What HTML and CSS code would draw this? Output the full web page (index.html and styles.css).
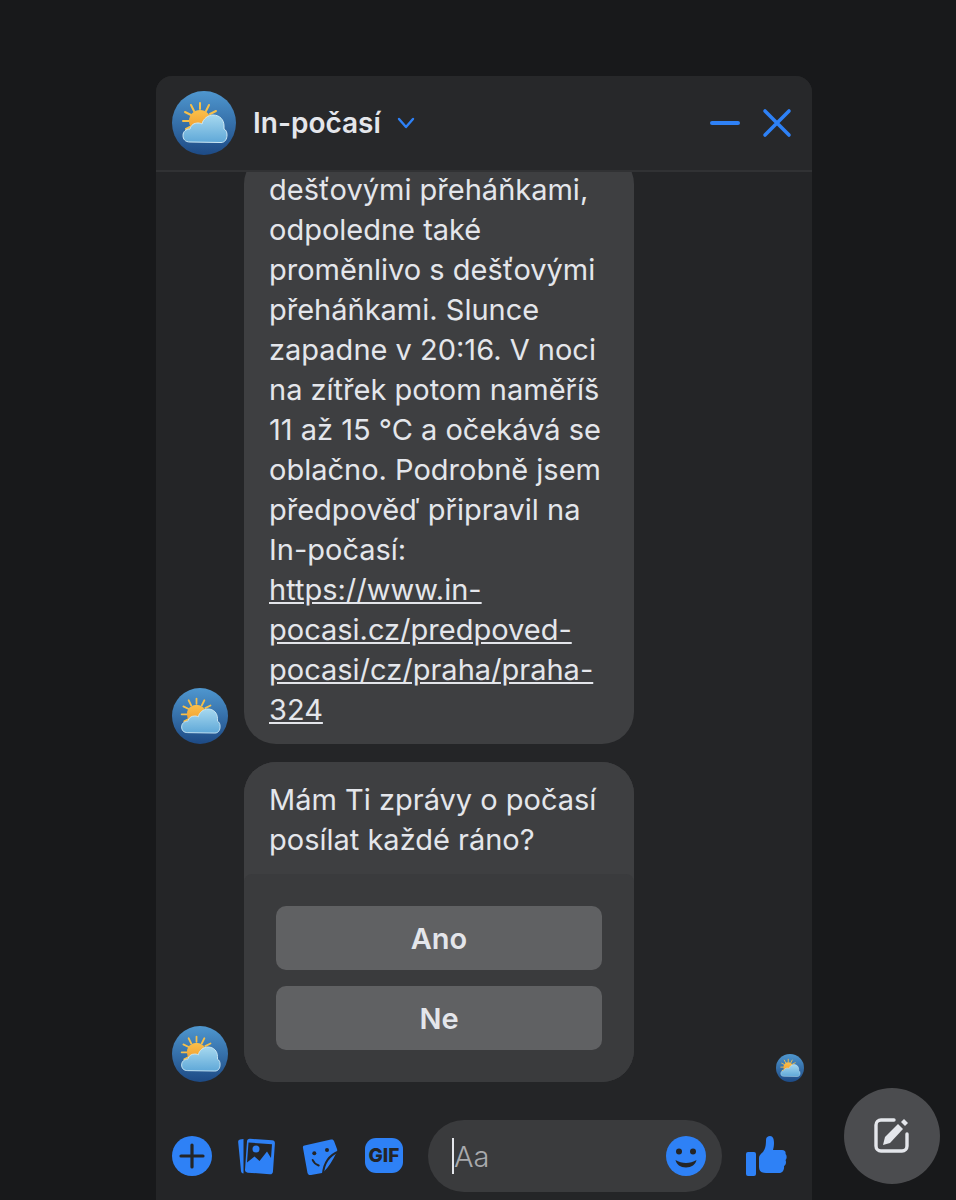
FILE: index.html
```html
<!DOCTYPE html>
<html>
<head>
  <meta charset="utf-8">
  <title>In-počasí</title>
  <link rel="stylesheet" href="styles.css">
</head>
<body>
  <svg class="sprites" width="0" height="0">
    <defs>
      <linearGradient id="skyFill" x1="0" y1="0" x2="0" y2="1">
        <stop offset="0" stop-color="#4f97cf"/>
        <stop offset="1" stop-color="#1d4a85"/>
      </linearGradient>
      <linearGradient id="sunFill" x1="0" y1="0" x2="0" y2="1">
        <stop offset="0" stop-color="#fbc04a"/>
        <stop offset="1" stop-color="#ef9a2d"/>
      </linearGradient>
      <linearGradient id="cloudFill" x1="0" y1="0" x2="0" y2="1">
        <stop offset="0" stop-color="#a6d8ef"/>
        <stop offset="1" stop-color="#5fa8d8"/>
      </linearGradient>
    </defs>
    <symbol id="weather" viewBox="0 0 64 64">
      <circle cx="32" cy="32" r="32" fill="url(#skyFill)"/>
      <g stroke="#f7c04a" stroke-width="2" stroke-linecap="round">
        <path d="M28 12v6M19 14l3 6M13 21l6 3M11 30h6M14 38l6-3M37 14l-3 6M44 20l-6 3"/>
      </g>
      <circle cx="28" cy="30" r="11" fill="url(#sunFill)"/>
      <path d="M18 51c-5 0-7-3-7-6.500 0-4 3-6.500 7-6.500 1-4 4-6 8-6 2 0 3 .5 4 1 1-5 6-9 11-9 7 0 11 5 11 11v3c2 1 3 3 3 6 0 4-2 7.500-6 7.500z" fill="url(#cloudFill)" stroke="#cfeaf6" stroke-width="1"/>
    </symbol>
  </svg>

  <div class="chat">
    <div class="chat-head">
      <svg class="avatar-lg"><use href="#weather"/></svg>
      <span class="chat-name">In-počasí</span>
      <svg class="chevron" viewBox="0 0 18 12"><path d="M2 2l7 8 7-8" fill="none" stroke="#2e81f6" stroke-width="2.400" stroke-linecap="round" stroke-linejoin="round"/></svg>
      <div class="head-actions">
        <svg class="head-min" viewBox="0 0 30 4"><path d="M2 2h26" stroke="#2e81f6" stroke-width="4" stroke-linecap="round"/></svg>
        <svg class="head-close" viewBox="0 0 30 30"><path d="M3 3l24 24M27 3L3 27" stroke="#2e81f6" stroke-width="3.600" stroke-linecap="round"/></svg>
      </div>
    </div>

    <div class="messages">
      <div class="msg-row">
        <svg class="avatar"><use href="#weather"/></svg>
        <div class="bubble">dešťovými přeháňkami, odpoledne také proměnlivo s dešťovými přeháňkami. Slunce zapadne v 20:16. V noci na zítřek potom naměříš 11 až 15 °C a očekává se oblačno. Podrobně jsem předpověď připravil na In-počasí: <a class="msg-link" href="#">https://www.in-pocasi.cz/predpoved-pocasi/cz/praha/praha-324</a></div>
      </div>
      <div class="msg-row">
        <svg class="avatar"><use href="#weather"/></svg>
        <div class="bubble-group">
          <div class="bubble bubble-top">Mám Ti zprávy o počasí posílat každé ráno?</div>
          <div class="reply-card">
            <button class="reply-btn">Ano</button>
            <button class="reply-btn">Ne</button>
          </div>
        </div>
        <svg class="avatar-read"><use href="#weather"/></svg>
      </div>
    </div>

    <div class="composer">
      <svg class="tool" viewBox="0 0 40 40">
        <circle cx="20" cy="20" r="20" fill="#2e81f6"/>
        <path d="M20 9v22M9 20h22" stroke="#242527" stroke-width="3.200" stroke-linecap="round"/>
      </svg>
      <svg class="tool" viewBox="0 0 40 40">
        <path d="M7.500 3L4 3.500C2.500 3.800 2 5 2.200 6.500L5 35c.2 1.500 1 2.300 2.500 2.500z" fill="#2e81f6"/>
        <rect x="10" y="3.500" width="28" height="34" rx="3" transform="rotate(4 24 20)" fill="#2e81f6"/>
        <path d="M12.500 6.500L36 8.200 35 22l-4-6.500-7.500 9.500-5-4.500-7.500 6z" fill="#242527"/>
        <circle cx="20" cy="13" r="3.500" fill="#2e81f6"/>
      </svg>
      <svg class="tool" viewBox="0 0 40 40">
        <path d="M4.500 9.500L31 3.500c1.500-.3 2.500.2 3 1.500l3 8c.8 2-.2 3-1 4.500-3 6-7 13-12 18l-2 1.500-11 2c-2 .3-3-.5-3.500-2L3 12c-.4-1.300.2-2.200 1.500-2.500z" fill="#2e81f6"/>
        <circle cx="14.300" cy="17.300" r="2" fill="#242527"/>
        <circle cx="27" cy="14" r="2" fill="#242527"/>
        <path d="M12.700 24c1 2.500 3 4.500 6 5.500M38.500 15.500C30 19 24 25 23 38" fill="none" stroke="#242527" stroke-width="2" stroke-linecap="round"/>
      </svg>
      <svg class="tool" viewBox="0 0 40 40">
        <rect x="1" y="2" width="38" height="35" rx="11" fill="#2e81f6"/>
        <text class="gif-label" x="20" y="26" text-anchor="middle">GIF</text>
      </svg>
      <div class="composer-input">
        <span class="caret"></span>
        <span class="placeholder">Aa</span>
        <svg class="emoji" viewBox="0 0 40 40">
          <circle cx="20" cy="20" r="20" fill="#2e81f6"/>
          <circle cx="13" cy="15.500" r="3" fill="#242527"/>
          <circle cx="27" cy="15.500" r="3" fill="#242527"/>
          <path d="M9.500 24c3 2 7 3 10.500 3s7.500-1 10.500-3c-.8 4.500-5 7.500-10.500 7.500S10.300 28.500 9.500 24z" fill="#242527"/>
        </svg>
      </div>
      <svg class="thumb" viewBox="0 0 44 44">
        <rect x="0" y="18" width="10" height="24" rx="2" fill="#2e81f6"/>
        <path d="M13 24c0-3 2-4 4-6 2-3 3-6 3-12 0-3 2-4 4-4 3 0 4 3 4 7 0 3-.5 5-1 7h9c3 0 4 2 3.500 4 1.500 1 1.500 5 0 6 1 2 .5 5-1.500 6 .5 3-1 7-5 7H20c-5 0-7-2-7-6z" fill="#2e81f6"/>
      </svg>
    </div>
  </div>

  <div class="compose-fab">
    <svg class="compose-icon" viewBox="0 0 40 40">
      <path d="M22 4H9a5 5 0 0 0-5 5v21a5 5 0 0 0 5 5h21a5 5 0 0 0 5-5V18" fill="none" stroke="#e4e6eb" stroke-width="3.400" stroke-linecap="round"/>
      <path d="M11 29l2-8L26 8l5 5-13 14z" fill="#e4e6eb"/>
      <path d="M29 6l3-3 4 4-3 3z" fill="#e4e6eb"/>
    </svg>
  </div>
</body>
</html>
```

FILE: styles.css
```css
html, body {
  height: 100%;
}
body {
  margin: 0;
  height: 1200px;
  overflow: hidden;
  position: relative;
  background: #18191b;
  color: #e4e6eb;
  font-family: Inter, 'Noto Sans', sans-serif;
}
.sprites {
  position: absolute;
}
.chat {
  box-sizing: border-box;
  width: 656px;
  height: 1124px;
  margin: 76px 0 0 156px;
  display: flex;
  flex-direction: column;
  background: #242527;
  border-radius: 16px 16px 0 0;
  overflow: hidden;
}
.chat-head {
  box-sizing: border-box;
  flex: none;
  height: 96px;
  padding: 0 20px 0 16px;
  display: flex;
  align-items: center;
  background: #27282a;
  border-bottom: 2px solid #313234;
}
.avatar-lg {
  width: 64px;
  height: 64px;
  flex: none;
}
.chat-name {
  margin-left: 17px;
  font-size: 28px;
  font-weight: 600;
}
.chevron {
  width: 18px;
  height: 12px;
  margin-left: 16px;
}
.head-actions {
  margin-left: auto;
  display: flex;
  align-items: center;
  gap: 22px;
}
.head-min {
  width: 30px;
  height: 4px;
}
.head-close {
  width: 30px;
  height: 30px;
}
.messages {
  flex: 1;
  min-height: 0;
  display: flex;
  flex-direction: column;
  justify-content: flex-end;
  gap: 18px;
  overflow: hidden;
}
.msg-row {
  flex: none;
  display: flex;
  align-items: flex-end;
  gap: 16px;
  padding: 0 8px 0 16px;
}
.avatar {
  width: 56px;
  height: 56px;
  flex: none;
}
.avatar-read {
  width: 28px;
  height: 28px;
  margin-left: auto;
}
.bubble {
  box-sizing: border-box;
  width: 390px;
  padding: 18px 25px 14px;
  background: #3e3f41;
  border-radius: 32px;
  font-size: 29px;
  line-height: 40px;
}
.msg-link {
  color: inherit;
  text-decoration: underline;
}
.bubble-group {
  width: 390px;
  background: #3e3f41;
  border-radius: 32px;
}
.bubble-top {
  border-radius: 32px 32px 0 0;
}
.reply-card {
  box-sizing: border-box;
  padding: 32px;
  display: flex;
  flex-direction: column;
  gap: 16px;
  background: #3a3b3d;
  border-radius: 8px 8px 32px 32px;
}
.reply-btn {
  height: 64px;
  border: none;
  border-radius: 10px;
  background: #606163;
  color: #e4e6eb;
  font-family: inherit;
  font-size: 29px;
  font-weight: 600;
}
.composer {
  flex: none;
  display: flex;
  align-items: center;
  gap: 24px;
  padding: 38px 22px 8px 16px;
}
.tool {
  width: 40px;
  height: 40px;
  flex: none;
}
.gif-label {
  font-family: Inter, sans-serif;
  font-size: 19px;
  font-weight: 800;
  fill: #242527;
}
.composer-input {
  flex: 1;
  height: 72px;
  display: flex;
  align-items: center;
  padding: 0 14px 0 24px;
  background: #3a3b3d;
  border-radius: 36px;
}
.caret {
  width: 2px;
  height: 36px;
  background: #e4e6eb;
}
.placeholder {
  margin-left: 0;
  font-size: 29px;
  font-weight: 300;
  color: #a9aaad;
}
.emoji {
  width: 40px;
  height: 40px;
  margin-left: auto;
  margin-right: 2px;
}
.thumb {
  width: 44px;
  height: 44px;
  flex: none;
}
.compose-fab {
  position: absolute;
  left: 844px;
  top: 1088px;
  width: 96px;
  height: 96px;
  display: flex;
  align-items: center;
  justify-content: center;
  background: #4b4c4f;
  border-radius: 50%;
}
.compose-icon {
  width: 40px;
  height: 40px;
}
```
